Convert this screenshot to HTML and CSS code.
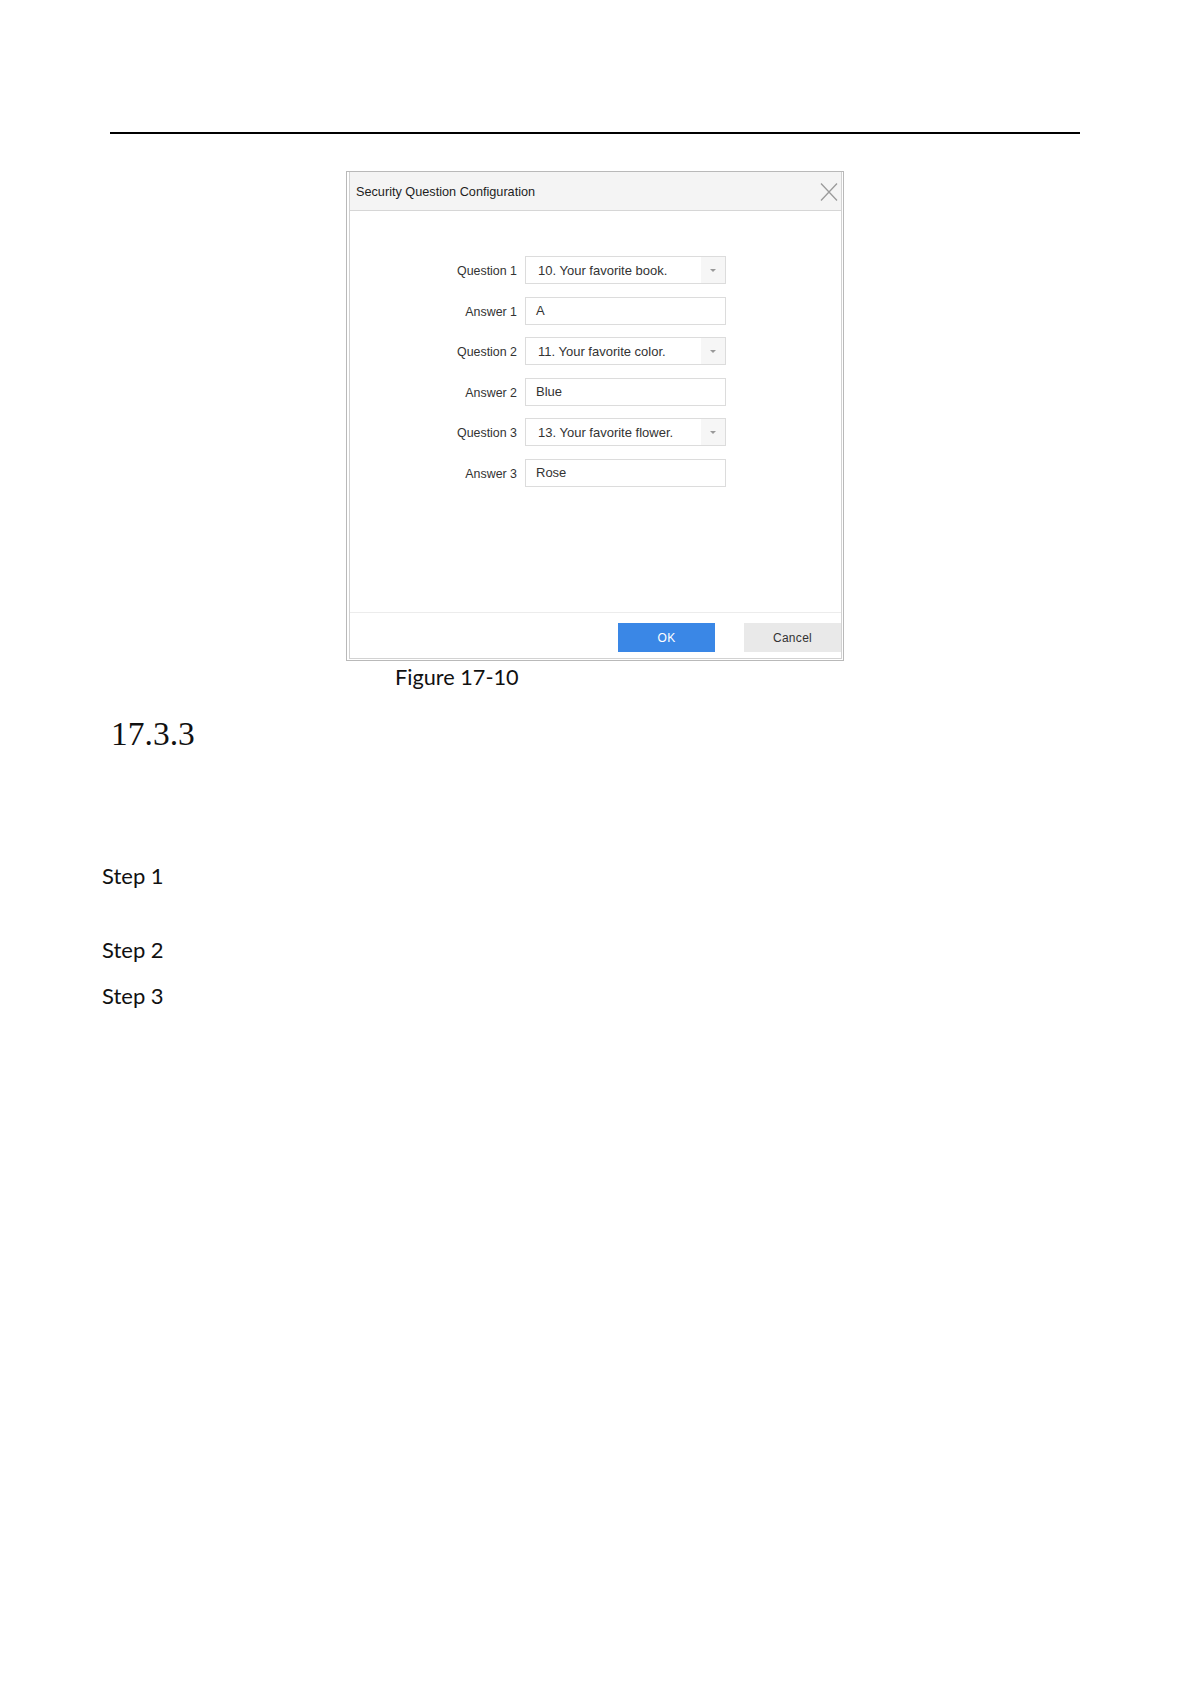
FILE: index.html
```html
<!DOCTYPE html>
<html>
<head>
<meta charset="utf-8">
<link rel="stylesheet" href="styles.css">
</head>
<body>
<div class="page">
  <div class="rule"></div>

  <div class="frame">
    <div class="dialog">
      <div class="dlg-head">
        <span class="dlg-title">Security Question Configuration</span>
        <svg class="dlg-close" width="18" height="20" viewBox="0 0 18 20">
          <path d="M1 1.5 L17 18.5 M17 1.5 L1 18.5" stroke="#9a9a9a" stroke-width="1.3" fill="none"/>
        </svg>
      </div>
      <div class="dlg-body">
        <div class="form">
          <div class="lbl">Question 1</div>
          <div class="select"><span class="val">10. Your favorite book.</span><span class="arrow"></span></div>
          <div class="lbl">Answer 1</div>
          <div class="input">A</div>
          <div class="lbl">Question 2</div>
          <div class="select"><span class="val">11. Your favorite color.</span><span class="arrow"></span></div>
          <div class="lbl">Answer 2</div>
          <div class="input">Blue</div>
          <div class="lbl">Question 3</div>
          <div class="select"><span class="val">13. Your favorite flower.</span><span class="arrow"></span></div>
          <div class="lbl">Answer 3</div>
          <div class="input">Rose</div>
        </div>
      </div>
      <div class="dlg-foot">
        <div class="btn btn-ok">OK</div>
        <div class="btn btn-cancel">Cancel</div>
      </div>
    </div>
  </div>

  <div class="caption">Figure 17-10</div>

  <div class="heading">17.3.3</div>

  <div class="step step1">Step 1</div>
  <div class="step step2">Step 2</div>
  <div class="step step3">Step 3</div>
</div>
</body>
</html>
```

FILE: styles.css
```css
html, body {
  margin: 0;
  padding: 0;
  background: #ffffff;
}

.page {
  width: 1191px;
  height: 1684px;
  overflow: hidden;
  padding-top: 132px;
  box-sizing: border-box;
}

.rule {
  margin-left: 110px;
  width: 970px;
  height: 2px;
  background: #000000;
}

.frame {
  margin-top: 37px;
  margin-left: 346px;
  width: 498px;
  box-sizing: border-box;
  border: 1px solid #b9b9b9;
  padding: 0 1px 1px 2px;
  background: #ffffff;
}

.dialog {
  border: 1px solid #d2d2d2;
  border-top: none;
  background: #ffffff;
  font-family: "Liberation Sans", Arial, sans-serif;
}

.dlg-head {
  height: 38px;
  background: #f4f4f4;
  border-bottom: 1px solid #d6d6d6;
  display: flex;
  align-items: center;
  justify-content: space-between;
  padding-left: 6px;
  padding-right: 3px;
}

.dlg-title {
  font-size: 12.7px;
  color: #1e1e1e;
  padding-top: 2px;
}

.dlg-close {
  display: block;
  margin-top: 1px;
}

.dlg-body {
  height: 401px;
  box-sizing: border-box;
  padding-top: 45px;
}

.form {
  display: grid;
  grid-template-columns: 167px 201px;
  column-gap: 8px;
  row-gap: 12.5px;
  align-items: center;
}

.lbl {
  text-align: right;
  font-size: 12.4px;
  color: #333333;
  padding-top: 2px;
}

.select, .input {
  height: 28px;
  box-sizing: border-box;
  border: 1px solid #dcdcdc;
  background: #ffffff;
  font-size: 13px;
  color: #333333;
  display: flex;
  align-items: center;
}

.select .val {
  flex: 1;
  padding-left: 12px;
}

.select .arrow {
  width: 24px;
  align-self: stretch;
  background: #f6f6f6;
  position: relative;
}

.select .arrow::after {
  content: "";
  position: absolute;
  left: 9px;
  top: 12px;
  border-left: 3px solid transparent;
  border-right: 3px solid transparent;
  border-top: 3px solid #999999;
}

.input {
  padding-left: 10px;
}

.dlg-foot {
  border-top: 1px solid #ececec;
  display: flex;
  justify-content: flex-end;
  gap: 29px;
  padding-top: 10px;
  padding-bottom: 6px;
}

.btn {
  width: 97px;
  height: 29px;
  display: flex;
  align-items: center;
  justify-content: center;
  font-size: 12px;
  letter-spacing: 0.3px;
}

.btn-ok {
  background: #3a87e6;
  color: #ffffff;
}

.btn-cancel {
  background: #e9e9e9;
  color: #333333;
}

.caption {
  margin-left: 395px;
  margin-top: 2px;
  font-family: Lato, "Liberation Sans", sans-serif;
  font-size: 21.7px;
  line-height: 28px;
  color: #111111;
}

.heading {
  margin-left: 111px;
  margin-top: 23px;
  font-family: "Liberation Serif", "Times New Roman", serif;
  font-size: 33.5px;
  line-height: 40px;
  color: #111111;
}

.step {
  margin-left: 102px;
  font-family: Lato, "Liberation Sans", sans-serif;
  font-size: 22px;
  line-height: 28px;
  color: #111111;
}

.step1 { margin-top: 108px; }
.step2 { margin-top: 46px; }
.step3 { margin-top: 18px; }
```
